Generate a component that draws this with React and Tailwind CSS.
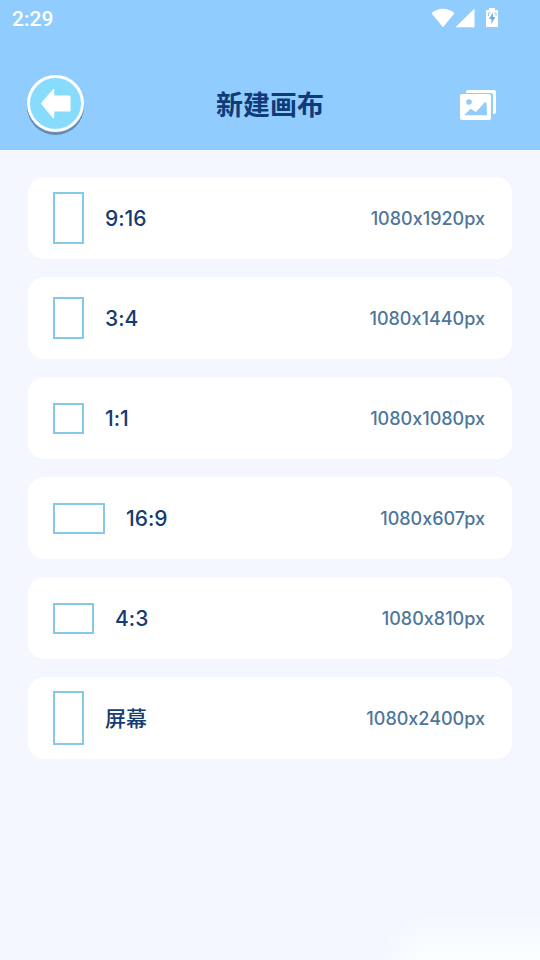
const sizes = [
  { label: "9:16", size: "1080x1920px", frame: "w-[31px] h-[52px]" },
  { label: "3:4", size: "1080x1440px", frame: "w-[31px] h-[42px]" },
  { label: "1:1", size: "1080x1080px", frame: "w-[31px] h-[31px]" },
  { label: "16:9", size: "1080x607px", frame: "w-[52px] h-[31px]" },
  { label: "4:3", size: "1080x810px", frame: "w-[41px] h-[31px]" },
  { label: "屏幕", size: "1080x2400px", frame: "w-[31px] h-[54px]" },
];

function StatusBar() {
  return (
    <div className="flex h-9 items-center justify-between pr-[41px] pl-3 text-white">
      <time className="pt-0.5 font-['Roboto',sans-serif] text-[21px] leading-9 font-medium">2:29</time>
      <div className="flex items-center">
        <svg className="h-5 w-6" viewBox="0 0 24 20" fill="currentColor" aria-label="Wi-Fi">
          <path d="M.5 5.200C7-.900 17-.900 23.500 5.200L12 19.200Z" />
        </svg>
        <svg className="h-5 w-5" viewBox="0 0 20 20" fill="currentColor" aria-label="信号">
          <path d="M19.500 0.500V19.200H0.500Z" />
        </svg>
        <svg className="ml-2.5 h-5 w-3.5" viewBox="0 0 14 20" aria-label="电池">
          <path fill="currentColor" d="M4 0h6v2h2q1 0 1 1v15q0 1-1 1H2q-1 0-1-1V3q0-1 1-1h2Z" />
          <path fill="#76abd8" d="M7.800 4.500L4 11h2.400v5L10.300 9H7.800Z" />
          <path fill="none" stroke="#91ccff" strokeWidth="1" d="M3.500 8V5h2M9.500 5h1.500v3" />
        </svg>
      </div>
    </div>
  );
}

function Header() {
  return (
    <header className="h-[150px] bg-[#91ccff]">
      <StatusBar />
      <div className="grid grid-cols-[1fr_auto_1fr] items-center px-[27px] pt-[39px]">
        <button
          type="button"
          aria-label="返回"
          className="flex h-[57px] w-[57px] items-center justify-center rounded-full border-[3px] border-white bg-[#87dcfe] text-white shadow-[0_3px_0_#668caf]"
        >
          <svg className="h-[30px] w-[30px]" viewBox="0 0 30 30" fill="currentColor" stroke="currentColor" strokeWidth="1.5" strokeLinejoin="round">
            <path d="M.8 14.500L12.500 .8V7.200H28.800V21.800H12.500V28.500Z" />
          </svg>
        </button>
        <h1 className="pt-1 text-[27px] leading-9 font-bold text-[#0f3c79]">新建画布</h1>
        <button type="button" aria-label="相册" className="mr-[17px] justify-self-end pt-0.5 text-white">
          <svg className="h-[30px] w-9" viewBox="0 0 36 30">
            <path fill="currentColor" d="M6 3V2q0-2 2-2h26q2 0 2 2v20q0 2-3 2V5q0-2-2-2Z" />
            <path fill="currentColor" fillRule="evenodd" d="M2 4h27q2 0 2 2v22q0 2-2 2H2q-2 0-2-2V6q0-2 2-2ZM4 25.200H27L26.500 13.500Q26 11.500 24.500 12.500L16 22L10.500 18.800Z" />
            <circle cx="9" cy="12" r="2.800" fill="#91ccff" />
          </svg>
        </button>
      </div>
    </header>
  );
}

export default function App() {
  return (
    <div className="relative flex min-h-screen flex-col bg-[#f4f7ff] font-['Inter','Noto_Sans_CJK_SC',sans-serif] [font-feature-settings:'calt'_0]">
      <Header />
      <main className="relative z-10 px-7 pt-[27px] pb-10">
        <ul className="flex flex-col gap-[18px]">
          {sizes.map(({ label, size, frame }) => (
            <li key={label}>
              <button
                type="button"
                className="flex h-[82px] w-full items-center rounded-2xl bg-white pr-[27px] pl-[25px] text-left"
              >
                <span className={`${frame} shrink-0 border-2 border-[#84cae8]`} />
                <span className="ml-[21px] pt-0.5 text-[21px] leading-8 font-medium text-[#153c6f]">{label}</span>
                <span className="ml-auto pt-0.5 text-[18px] leading-8 font-medium text-[#4e769a]">{size}</span>
              </button>
            </li>
          ))}
        </ul>
      </main>
      <div className="pointer-events-none absolute right-0 bottom-0 h-12 w-40 bg-linear-to-b from-transparent to-[#fafeff] mask-l-from-75%" />
    </div>
  );
}
